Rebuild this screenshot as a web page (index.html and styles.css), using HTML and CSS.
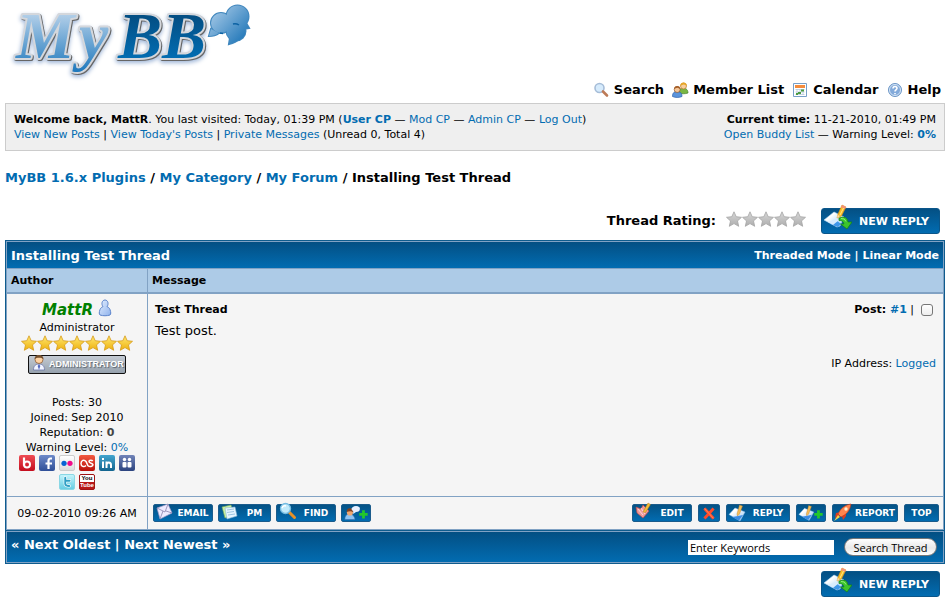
FILE: index.html
```html
<!DOCTYPE html>
<html lang="en">
<head>
<meta charset="utf-8">
<title>Installing Test Thread</title>
<link rel="stylesheet" href="styles.css">
</head>
<body>
<svg class="defs" width="0" height="0" aria-hidden="true">
  <defs>
    <linearGradient id="g-light" x1="0" y1="0" x2="0" y2="1"><stop offset="0.2" stop-color="#b4d0e9"/><stop offset="1" stop-color="#1e78bd"/></linearGradient>
    <linearGradient id="g-dark" x1="0" y1="0" x2="0" y2="1"><stop offset="0.25" stop-color="#034f85"/><stop offset="0.8" stop-color="#026cb1"/></linearGradient>
    <linearGradient id="g-bubble" gradientUnits="userSpaceOnUse" x1="212" y1="8" x2="246" y2="40"><stop offset="0" stop-color="#a9cbe8"/><stop offset="1" stop-color="#1f76b8"/></linearGradient>
    <linearGradient id="g-gold" x1="0" y1="0" x2="0" y2="1"><stop offset="0" stop-color="#ffe873"/><stop offset="1" stop-color="#eeb10c"/></linearGradient>
    <linearGradient id="g-grey" x1="0" y1="0" x2="0" y2="1"><stop offset="0" stop-color="#d8d8d8"/><stop offset="1" stop-color="#adadad"/></linearGradient>
    <linearGradient id="g-user" x1="0" y1="0" x2="1" y2="1"><stop offset="0" stop-color="#e4efff"/><stop offset="1" stop-color="#8fb2ec"/></linearGradient>
    <linearGradient id="g-paper" x1="0" y1="0" x2="1" y2="1"><stop offset="0.3" stop-color="#ffffff"/><stop offset="1" stop-color="#8cc4f4"/></linearGradient>
  </defs>
  <symbol id="star" viewBox="0 0 16 16"><path d="M8 .8l2.200 4.900 5.300.6-4 3.600 1.200 5.400L8 12.600l-4.700 2.700 1.200-5.400-4-3.600 5.300-.6z" stroke-width=".8"/></symbol>
  <symbol id="reply" viewBox="0 0 28 28">
    <path d="M0 16L10 8l10 5-4 9-3 1z" fill="url(#g-paper)" stroke="#b9daf5" stroke-width=".6"/>
    <path d="M6 20l8 3 3-3-5-4z" fill="#3f97e8"/><path d="M4 18l7-3 4 1-6 5z" fill="#d8ecfd"/>
    <path d="M15 14q8-3 9 4h4l-5 7-6.500-5h3.500q-1-4-5-3.500z" fill="#3cc42c" stroke="#168016" stroke-width=".7"/>
    <path d="M17 14.500q4-.5 5 3" fill="none" stroke="#8ff07a"/>
    <path d="M13 14l1-4L18 1l4 2-4.500 9z" fill="#fbbb24" stroke="#d08a18" stroke-width=".5"/>
    <path d="M18 1l4 2-1 2-4-2z" fill="#f58f7c"/><path d="M13 14l.7-3 2.300 1z" fill="#f9deb0"/><path d="M16 11l3.500-7" stroke="#ffe98a"/>
  </symbol>
  <symbol id="note" viewBox="0 0 20 18">
    <path d="M2 10.500L8 4l10 4-5 9z" fill="url(#g-paper)" stroke="#8fc2ee" stroke-width=".5"/>
    <path d="M5 13l7 3.500 4-5.500-5 1z" fill="#3c8de4"/><path d="M10 10l2.500-9 3 1-3 8-2 2z" fill="#f3bd59" stroke="#bb7b25" stroke-width=".4"/>
  </symbol>
</svg>

<header class="header">
  <a class="logo" href="#" aria-label="MyBB">
    <svg viewBox="0 0 260 80" width="260" height="80" role="img" aria-label="MyBB">
      <g class="logo-text"><text x="16 79" y="58" fill="url(#g-light)">My</text><text x="118" y="58" fill="url(#g-dark)">BB</text></g>
      <g fill="#3f86bd" stroke="#3f86bd" stroke-width="2"><circle cx="237.500" cy="16.500" r="11"/><circle cx="221" cy="23" r="10"/><circle cx="236" cy="31" r="9.500"/><path d="M211 29l-2 7q6 0 10-3zM230 38l-1 6q7-2 10-5zM242 24l1 5 6-1-3-5z"/></g>
      <g fill="url(#g-bubble)"><circle cx="237.500" cy="16.500" r="11"/><circle cx="221" cy="23" r="10"/><circle cx="236" cy="31" r="9.500"/><path d="M211 29l-2 7q6 0 10-3zM230 38l-1 6q7-2 10-5zM242 24l1 5 6-1-3-5z"/></g>
      <path d="M233 24q3-1 6 1m-19 8l3 .5" fill="none" stroke="#0d62a3" stroke-width="1.500"/>
    </svg>
  </a>
  <nav class="toplinks">
    <a href="#"><svg viewBox="0 0 16 16"><circle cx="6.500" cy="6" r="4.500" fill="#d6ebfc" stroke="#a6bdd8" stroke-width="1.600"/><path d="M10 9.500l4 4" stroke="#bd7b57" stroke-width="2.600" stroke-linecap="round"/></svg>Search</a>
    <a href="#"><svg viewBox="0 0 16 16"><path d="M7 10c0-3 2-4 4-4s5 1 5 5c-3 1-6 1-9 0z" fill="#79b643" stroke="#458128" stroke-width=".7"/><circle cx="11.500" cy="4" r="3" fill="#f7cf9e" stroke="#bd7a24" stroke-width=".7"/><path d="M8.300 4c0-5 7-4.500 6.500 0-2-2-4-2-6.500 0z" fill="#e7a627"/><path d="M.5 14.500c0-4 2-5 4.500-5s5 1 5 5c-3 1.300-6.500 1.300-9.500 0z" fill="#5b94db" stroke="#2a60ac" stroke-width=".7"/><circle cx="5.200" cy="7.500" r="3" fill="#f5c79a" stroke="#8c5527" stroke-width=".7"/><path d="M2 7.300c0-4.500 6.500-4.500 6.300 0-2-2-4-2-6.300 0z" fill="#a55e27"/></svg>Member List</a>
    <a href="#"><svg viewBox="0 0 16 16"><path d="M1.500 1.500h13v13h-13z" fill="#fff" stroke="#779fc8"/><path d="M3 3h10v3H3z" fill="#f48c3d"/><path d="M3.500 7.500h9M3.500 10h9M3.500 12.500h9M5 7v6M8 7v6M11 7v6" stroke="#b8c9dc" stroke-width=".8"/><path d="M9 7.500h3v2H9zM6 10h3v2H6zM4 11h2v2H4z" fill="#4c9c42"/></svg>Calendar</a>
    <a href="#"><svg viewBox="0 0 16 16"><circle cx="8" cy="8" r="6.500" fill="#83aada" stroke="#6c96c5"/><circle cx="8" cy="8" r="5.500" fill="none" stroke="#d5e5f6"/><path d="M6 6.500C6 3.700 10 4 10 6.300 10 7.800 8 8 8 9.500M8 11v1.300" fill="none" stroke="#fff" stroke-width="1.600"/></svg>Help</a>
  </nav>
</header>

<section class="panel">
  <div>
    <p><strong>Welcome back, MattR</strong>. You last visited: Today, 01:39 PM (<a href="#"><strong>User CP</strong></a> — <a href="#">Mod CP</a> — <a href="#">Admin CP</a> — <a href="#">Log Out</a>)</p>
    <p><a href="#">View New Posts</a> | <a href="#">View Today's Posts</a> | <a href="#">Private Messages</a> (Unread 0, Total 4)</p>
  </div>
  <div class="panel-right">
    <p><strong>Current time:</strong> 11-21-2010, 01:49 PM</p>
    <p><a href="#">Open Buddy List</a> — Warning Level: <a href="#"><strong>0%</strong></a></p>
  </div>
</section>

<nav class="breadcrumb"><a href="#">MyBB 1.6.x Plugins</a> / <a href="#">My Category</a> / <a href="#">My Forum</a> / Installing Test Thread</nav>

<div class="thread-tools">
  <span class="rating-label">Thread Rating:</span>
  <span class="stars stars-grey"><svg><use href="#star"/></svg><svg><use href="#star"/></svg><svg><use href="#star"/></svg><svg><use href="#star"/></svg><svg><use href="#star"/></svg></span>
  <a class="new-reply" href="#"><svg><use href="#reply"/></svg>NEW REPLY</a>
</div>

<main class="thread">
  <div class="frame">
    <div class="thead">
      <h1>Installing Test Thread</h1>
      <span class="modes"><a href="#">Threaded Mode</a> | <a href="#">Linear Mode</a></span>
    </div>
    <div class="columns tcat"><div>Author</div><div>Message</div></div>
    <article class="columns post">
      <div class="author">
        <div class="name"><a href="#">MattR</a><svg viewBox="0 0 14 18"><path d="M2 10.500c1-2 2-2.500 3-2.800C3 5 4 1 7 1s4 4 2 6.700c1 .3 2 .8 3 2.800 1 3 1 4.500 0 5.500-3 1-7 1-10 0-1-1-1-2.500 0-5.500z" fill="url(#g-user)" stroke="#5b83cb"/></svg></div>
        <div>Administrator</div>
        <div class="stars stars-gold"><svg><use href="#star"/></svg><svg><use href="#star"/></svg><svg><use href="#star"/></svg><svg><use href="#star"/></svg><svg><use href="#star"/></svg><svg><use href="#star"/></svg><svg><use href="#star"/></svg></div>
        <div class="badge"><svg viewBox="0 0 14 18"><path d="M1.500 16c0-4 2-6 5.500-6s5.500 2 5.500 6z" fill="#f1f4ff" stroke="#6973a8" stroke-width=".8"/><path d="M7 10l-1.300 2L7 16l1.300-4z" fill="#5267bd"/><circle cx="7" cy="5.500" r="4" fill="#ffd3a3" stroke="#8b5a36" stroke-width=".8"/><path d="M2.500 5C2.500-.5 11.500-.5 11.500 5 9 3.500 5.500 3 2.500 5z" fill="#74502e"/></svg>ADMINISTRATOR</div>
        <div class="stats">
          <div>Posts: 30</div><div>Joined: Sep 2010</div><div>Reputation: <strong>0</strong></div><div>Warning Level: <a href="#">0%</a></div>
        </div>
        <div class="social">
          <a href="#" class="bebo" aria-label="Bebo"><svg viewBox="0 0 16 16"><path d="M5 2.500v8" stroke="#fff" stroke-width="2.200"/><circle cx="8" cy="9.500" r="3" fill="none" stroke="#fff" stroke-width="2"/></svg></a>
          <a href="#" class="facebook" aria-label="Facebook"><svg viewBox="0 0 16 16"><path d="M13 3.500h-1.500Q9.500 3.500 9.500 6v8M6.500 8.500H13" fill="none" stroke="#fff" stroke-width="2.200"/></svg></a>
          <a href="#" class="flickr" aria-label="Flickr"><svg viewBox="0 0 16 16"><circle cx="4.600" cy="8.300" r="3" fill="#0864d4"/><circle cx="11.400" cy="8.300" r="3" fill="#f00c8a"/></svg></a>
          <a href="#" class="lastfm" aria-label="Last.fm"><svg viewBox="0 0 16 16"><path d="M7 10.500c-2 2-5 1-5-2s3-4.500 5-2l2 4.200c1.500 1.300 5 1 5-.9 0-2-4-1.200-4-3.200 0-1.800 3-1.500 3.700-.6" fill="none" stroke="#fff" stroke-width="1.500"/></svg></a>
          <a href="#" class="linkedin" aria-label="LinkedIn"><svg viewBox="0 0 16 16"><path d="M4 6.500V13M4 3v2M7.500 6.500V13m0-3c0-3.500 4.500-3.500 4.500 0v3" fill="none" stroke="#fff" stroke-width="2"/></svg></a>
          <a href="#" class="myspace" aria-label="Myspace"><svg viewBox="0 0 16 16"><g fill="#fff"><circle cx="5.500" cy="4.500" r="1.700"/><circle cx="10.500" cy="4.500" r="1.700"/><rect x="3.500" y="7" width="4" height="5.500" rx="1"/><rect x="8.500" y="7" width="4" height="5.500" rx="1"/></g></svg></a>
          <a href="#" class="twitter" aria-label="Twitter"><svg viewBox="0 0 16 16"><path d="M6 3v7q0 2.500 4.500 2.500M6 6.500h5" fill="none" stroke="#fff" stroke-width="3.600" stroke-linecap="round"/><path d="M6 3v7q0 2.500 4.500 2.500M6 6.500h5" fill="none" stroke="#2f9ec4" stroke-width="2.200" stroke-linecap="round"/></svg></a>
          <a href="#" class="youtube" aria-label="YouTube"><span>You</span><span>Tube</span></a>
        </div>
      </div>
      <div class="message">
        <div class="message-head"><strong>Test Thread</strong><label class="pick"><span><strong>Post: <a href="#">#1</a></strong> |</span><input type="checkbox" aria-label="Select post 1"></label></div>
        <p class="body">Test post.</p>
        <p class="ip">IP Address: <a href="#">Logged</a></p>
      </div>
    </article>
    <div class="columns actions">
      <div class="date">09-02-2010 09:26 AM</div>
      <div class="buttons">
        <div class="group">
          <a class="btn w60" href="#"><svg viewBox="0 0 20 18"><path d="M3 4l11-4 4 9-12 6z" fill="#eeeaff" stroke="#a49ac5" stroke-width=".7"/><path d="M3 4l8 4 3-8M6 15l3-8M18 9l-6-2" fill="none" stroke="#8c83ad" stroke-width=".8"/></svg><span>EMAIL</span></a>
          <a class="btn w53" href="#"><svg viewBox="0 0 20 18"><path d="M3 3l9-2 3 10-9 3z" fill="#c9f0a5" stroke="#77a65a" stroke-width=".6"/><path d="M6 4l10-1 2 9-10 3z" fill="#e7f6ff" stroke="#8bb8d5" stroke-width=".6"/><path d="M8 6l7-1M8 8.500l7-1M9 11l7-1" stroke="#8cb9db" stroke-width=".8"/></svg><span>PM</span></a>
          <a class="btn w60" href="#"><svg viewBox="0 0 20 18"><path d="M12 8l5.500 5.500" stroke="#e79127" stroke-width="3" stroke-linecap="round"/><circle cx="8.500" cy="4.500" r="5" fill="#c1eafb" stroke="#75bce2" stroke-width="1.300"/><path d="M5 4q1-3 4-2" stroke="#fff" stroke-width="1.500" fill="none"/></svg><span>FIND</span></a>
          <a class="btn w30" href="#" aria-label="Add buddy"><svg class="wide" viewBox="0 0 30 18"><path d="M3 16q0-6 5-6t6 6z" fill="#8cc4f4" stroke="#376cab" stroke-width=".6"/><circle cx="8.500" cy="8.500" r="3.300" fill="#efa771"/><path d="M5 8q0-5 4-4t3 4q-3-2-7 0z" fill="#804222"/><path d="M11 3q4-3 8 0 1 5-4 5l-3 2v-3q-3-2-1-4z" fill="#e7efff"/><path d="M18.500 10.500h9M23 6v9" stroke="#22c82b" stroke-width="3"/></svg></a>
        </div>
        <div class="group group-right">
          <a class="btn w60" href="#"><svg viewBox="0 0 20 18"><path d="M3 3l5 2 2-4 6 6-6 7-6-5z" fill="#f09a9a" stroke="#b94949" stroke-width=".7"/><path d="M5 5l5 6M8 4l4 6" stroke="#ffd7d7"/><path d="M10 8l5-9 2.500 1.500-5 8z" fill="#f4bd35" stroke="#b07a22" stroke-width=".5"/></svg><span>EDIT</span></a>
          <a class="btn w22" href="#" aria-label="Delete"><svg class="wide" viewBox="0 0 22 18"><path d="M6 4l10 11M16 4L6 15" stroke="#ff4a2a" stroke-width="3.200"/><path d="M6 4l10 11" stroke="#ff8b61"/></svg></a>
          <a class="btn w64" href="#"><svg><use href="#note"/></svg><span>REPLY</span></a>
          <a class="btn w30" href="#" aria-label="Multiquote"><svg class="wide" viewBox="0 0 30 18"><use href="#note" width="20" height="18"/><path d="M18.500 10.500h9M23 6v9" stroke="#22c82b" stroke-width="3"/></svg></a>
          <a class="btn w66" href="#"><svg viewBox="0 0 20 18"><path d="M8 8L3 9l-1 5 4-2M9 12l1 4 3-4V8" fill="#d93e21"/><path d="M5 10Q9 1 18 0 17 9 8 13z" fill="#ff854e" stroke="#ba3116" stroke-width=".6"/><circle cx="13" cy="5" r="1.700" fill="#fff1d5"/><path d="M5 11l-4 6 6-4z" fill="#ffd343"/></svg><span>REPORT</span></a>
          <a class="btn w35" href="#"><span>TOP</span></a>
        </div>
      </div>
    </div>
  </div>
  <div class="frame">
    <div class="thead tfoot">
      <strong>« <a href="#">Next Oldest</a> | <a href="#">Next Newest</a> »</strong>
      <form class="search"><input type="text" value="Enter Keywords" aria-label="Keywords"><button type="button">Search Thread</button></form>
    </div>
  </div>
</main>

<div class="thread-tools bottom"><a class="new-reply" href="#"><svg><use href="#reply"/></svg>NEW REPLY</a></div>
</body>
</html>
```

FILE: styles.css
```css
* { box-sizing: border-box; }
body {
  margin: 0;
  padding: 0 3px 0 5px;
  background: #fff;
  color: #000;
  font: 11px/15px "DejaVu Sans", Verdana, sans-serif;
}
p, h1 { margin: 0; }
a { color: #026cb1; text-decoration: none; }
svg { display: block; flex: none; overflow: visible; }
.defs { position: absolute; }

.logo { display: block; width: 260px; margin-left: -5px; }
.logo-text {
  font: italic bold 66px "Liberation Serif", serif;
  stroke: #d4d7dc;
  stroke-width: 4px;
  stroke-linejoin: round;
  paint-order: stroke;
  filter: drop-shadow(1px 1px 0 #666) drop-shadow(0 2px 2px #9fb6d8);
}
.toplinks {
  display: flex;
  justify-content: flex-end;
  gap: 8px;
  padding-right: 4px;
  margin-bottom: 3px;
  font-size: 13px;
  line-height: 20px;
  font-weight: bold;
}
.toplinks a { display: flex; align-items: center; gap: 5px; color: #000; }
.toplinks svg { width: 16px; height: 16px; }

.panel {
  display: flex;
  justify-content: space-between;
  padding: 8px;
  border: 1px solid #ccc;
  background: #efefef;
}
.panel-right { text-align: right; }
.breadcrumb { margin: 19px 0 22px; font-size: 13px; line-height: 16px; font-weight: bold; }

.thread-tools {
  display: flex;
  justify-content: flex-end;
  align-items: center;
  padding-right: 5px;
  margin-bottom: 6px;
}
.bottom { margin: 7px 0 0; }
.rating-label { font-size: 13px; font-weight: bold; margin: 0 10px 2px 0; }
.stars { display: flex; justify-content: center; }
.stars svg { width: 16px; height: 16px; }
.stars-grey { fill: url(#g-grey); stroke: #a5a5a5; margin: 0 15px 4px 0; }
.stars-gold { fill: url(#g-gold); stroke: #d69b1b; }
.new-reply {
  display: flex;
  align-items: center;
  width: 119px;
  height: 26px;
  padding-left: 3px;
  gap: 7px;
  border: 1px solid #0b568a;
  border-radius: 3px;
  background: linear-gradient(#045084, #026cb1);
  color: #fff;
  font-size: 11px;
  font-weight: bold;
}
.new-reply svg { width: 28px; height: 28px; margin-top: -6px; margin-left: -1px; }

.thread { border: 1px solid #0f5c8e; background: #0f5c8e; }
.frame { border: 1px solid #81a2c4; }
.frame + .frame { margin-top: 1px; }
.thead {
  display: flex;
  justify-content: space-between;
  align-items: center;
  height: 26px;
  padding: 0 4px;
  background: linear-gradient(#034f83, #026cb1);
  color: #fff;
  font-size: 13px;
}
.thead a { color: #fff; }
.thead h1 { font-size: 13px; }
.modes { font-size: 11px; font-weight: bold; }
.columns {
  display: grid;
  grid-template-columns: 140px 1fr;
  column-gap: 1px;
  border-top: 1px solid #81a2c4;
  background: #81a2c4;
}
.columns > div { background: #f5f5f5; }
.tcat > div { padding: 4px; background: #adcbe7; font-weight: bold; }
.post { border-top-width: 2px; }
.author { padding: 5px 4px 6px; text-align: center; }
.name {
  display: flex;
  justify-content: center;
  align-items: center;
  gap: 5px;
  height: 21px;
  font: italic bold 15px/20px "DejaVu Sans", Verdana, sans-serif;
}
.name a { color: #008000; }
.name svg { width: 14px; height: 18px; margin-top: -4px; }
.badge {
  display: flex;
  align-items: center;
  gap: 3px;
  width: 98px;
  height: 19px;
  margin: 4px auto 21px;
  padding-left: 3px;
  border: 1px solid #111;
  border-radius: 2px;
  background: linear-gradient(#c4cbd3, #96a1ad);
  color: #fff;
  font: bold 9px/15px "Liberation Sans", sans-serif;
  text-shadow: 1px 1px 1px #59636e;
}
.badge svg { width: 14px; height: 18px; margin-top: -4px; }
.stats strong { color: #444; }
.social {
  display: flex;
  flex-wrap: wrap;
  justify-content: center;
  gap: 3px 4px;
}
.social a { width: 16px; height: 16px; border-radius: 2px; overflow: hidden; }
.bebo { background: linear-gradient(#ee4c54, #c40d1e); }
.facebook { background: linear-gradient(#6d8ac9, #2f4f98); }
.flickr { background: linear-gradient(#fff, #ddd); border: 1px solid #ccc; }
.lastfm { background: linear-gradient(#f25a41, #b90f0a); }
.linkedin { background: linear-gradient(#43a5ce, #12648f); }
.myspace { background: linear-gradient(#7184b8, #2b437f); }
.twitter { background: linear-gradient(#c2f4fb, #68cde3); border: 1px solid #8ad7e5; }
.youtube { background: #b81818; border: 1px solid #9d1515; font: bold 6px/7px "Liberation Sans", sans-serif; color: #fff; }
.youtube span { display: block; }
.youtube span:first-child { background: #fff; color: #000; }

.message { padding: 8px 7px; }
.message-head { display: flex; justify-content: space-between; }
.pick { display: flex; align-items: center; gap: 7px; margin-right: 3px; }
.pick input {
  appearance: none;
  width: 12px;
  height: 12px;
  margin: 0;
  border: 1px solid #777;
  border-radius: 3px;
  background: linear-gradient(#fff, #eee);
}
.body { margin: 6px 0 17px; font-size: 13px; line-height: 16px; }
.ip { text-align: right; }
.date { padding: 9px 4px 8px; text-align: center; }
.buttons { display: flex; justify-content: space-between; align-items: center; padding: 0 4px 0 5px; }
.group { display: flex; gap: 5px; }
.group-right { gap: 6px; }
.btn {
  display: flex;
  height: 18px;
  border: 1px solid #1b5c8c;
  border-radius: 2px;
  background: linear-gradient(#045285, #026cb1);
  color: #fff;
  font: bold 9px/16px "DejaVu Sans", Verdana, sans-serif;
}
.btn svg { width: 20px; height: 18px; margin-top: -1px; }
.btn svg.wide { width: 100%; }
.btn span { flex: 1; text-align: center; }
.w22 { width: 22px; }
.w30 { width: 30px; }
.w35 { width: 35px; }
.w53 { width: 53px; }
.w60 { width: 60px; }
.w64 { width: 64px; }
.w66 { width: 66px; }

.tfoot { height: 30px; padding-right: 6px; }
.tfoot strong { align-self: flex-start; line-height: 26px; }
.search { display: flex; align-items: center; gap: 10px; }
.search input {
  width: 146px;
  height: 15px;
  padding: 0 2px;
  border: 0;
  background: #fff;
  font: 11px/15px "Open Sans", sans-serif;
}
.search button {
  width: 93px;
  height: 18px;
  padding: 0;
  border: 1px solid #777;
  border-radius: 9px;
  background: linear-gradient(#fff, #e8e8e8 55%, #fff);
  font: 11px/15px "Open Sans", sans-serif;
}
```
